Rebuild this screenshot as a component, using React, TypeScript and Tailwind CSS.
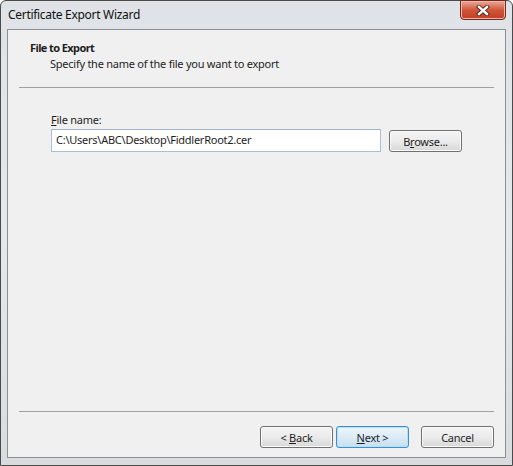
import React from "react";

const font = { fontFamily: '"Noto Sans", "Open Sans", Arial, sans-serif' };

const WinButton = ({
  children,
  primary = false,
  className = "",
}: {
  children: React.ReactNode;
  primary?: boolean;
  className?: string;
}) => (
  <button
    className={
      "h-[22px] w-[73px] rounded-[3px] border text-[11px] leading-none tracking-[-0.25px] text-[#1e1e1e] " +
      (primary
        ? "border-[#3c8ed3] bg-gradient-to-b from-[#eef6fc] via-[#dcebf6] to-[#c6dff0] shadow-[inset_0_0_0_1px_#b8e0f7] "
        : "border-[#707070] bg-gradient-to-b from-[#f4f4f4] via-[#ebebeb] to-[#d8d8d8] shadow-[inset_0_0_0_1px_#fbfbfb] ") +
      className
    }
  >
    {children}
  </button>
);

export default function App() {
  return (
    <div style={font} className="w-[513px] h-[466px] overflow-hidden bg-white">
      {/* window frame */}
      <div className="relative flex h-full w-full flex-col rounded-t-[6px] border border-[#4a4a4a] bg-gradient-to-b from-[#dfe2e6] via-[#e6e8eb] to-[#d9dcdf] px-[6px] pb-[7px]">
        {/* title bar */}
        <div className="flex h-[28px] items-center pl-[1px] text-[12px] tracking-[-0.3px] text-[#111]">
          Certificate Export Wizard
        </div>
        <div className="absolute right-[6px] top-[-1px] flex h-[20px] w-[46px] items-center justify-center rounded-b-[4px] border border-[#6b2a20] bg-gradient-to-b from-[#e9a99a] via-[#d0553a] to-[#c23c22] shadow-[inset_0_0_0_1px_#f0b8a8]">
          <svg width="14" height="11" viewBox="0 0 14 11">
            <path
              d="M3 2 L11 9 M11 2 L3 9"
              stroke="#4a2018"
              strokeWidth="4.2"
              strokeLinecap="square"
            />
            <path
              d="M3 2 L11 9 M11 2 L3 9"
              stroke="#ffffff"
              strokeWidth="2.4"
              strokeLinecap="square"
            />
          </svg>
        </div>

        {/* client area */}
        <div className="flex flex-1 flex-col border border-[#8c8f93] bg-[#f0f0f0] text-[11px] tracking-[-0.25px] text-[#1e1e1e]">
          {/* header */}
          <div className="h-[57px] pl-[22px] pt-[10px]">
            <div className="font-bold leading-[16px] tracking-[-0.6px]">File to Export</div>
            <div className="pl-[20px] leading-[16px]">
              Specify the name of the file you want to export
            </div>
          </div>
          <div className="mx-[11px] h-px bg-[#a0a0a0]" />

          {/* body */}
          <div className="flex-1 pl-[43px] pt-[24px]">
            <div className="leading-[16px]">
              <span className="underline">F</span>ile name:
            </div>
            <div className="mt-px flex items-start gap-[8px]">
              <div className="flex h-[23px] w-[330px] items-center border border-[#abc0d8] border-t-[#9fb3c9] bg-white pl-[4px]">
                C:\Users\ABC\Desktop\FiddlerRoot2.cer
              </div>
              <WinButton className="mt-px">
                B<span className="underline">r</span>owse...
              </WinButton>
            </div>
          </div>

          {/* footer */}
          <div className="mx-[11px] h-px bg-[#a0a0a0]" />
          <div className="flex h-[45px] items-start justify-end gap-[3px] pr-[11px] pt-[14px]">
            <WinButton>
              &lt; <span className="underline">B</span>ack
            </WinButton>
            <WinButton primary className="w-[72px]">
              <span className="underline">N</span>ext &gt;
            </WinButton>
            <WinButton className="ml-[9px]">Cancel</WinButton>
          </div>
        </div>
      </div>
    </div>
  );
}
